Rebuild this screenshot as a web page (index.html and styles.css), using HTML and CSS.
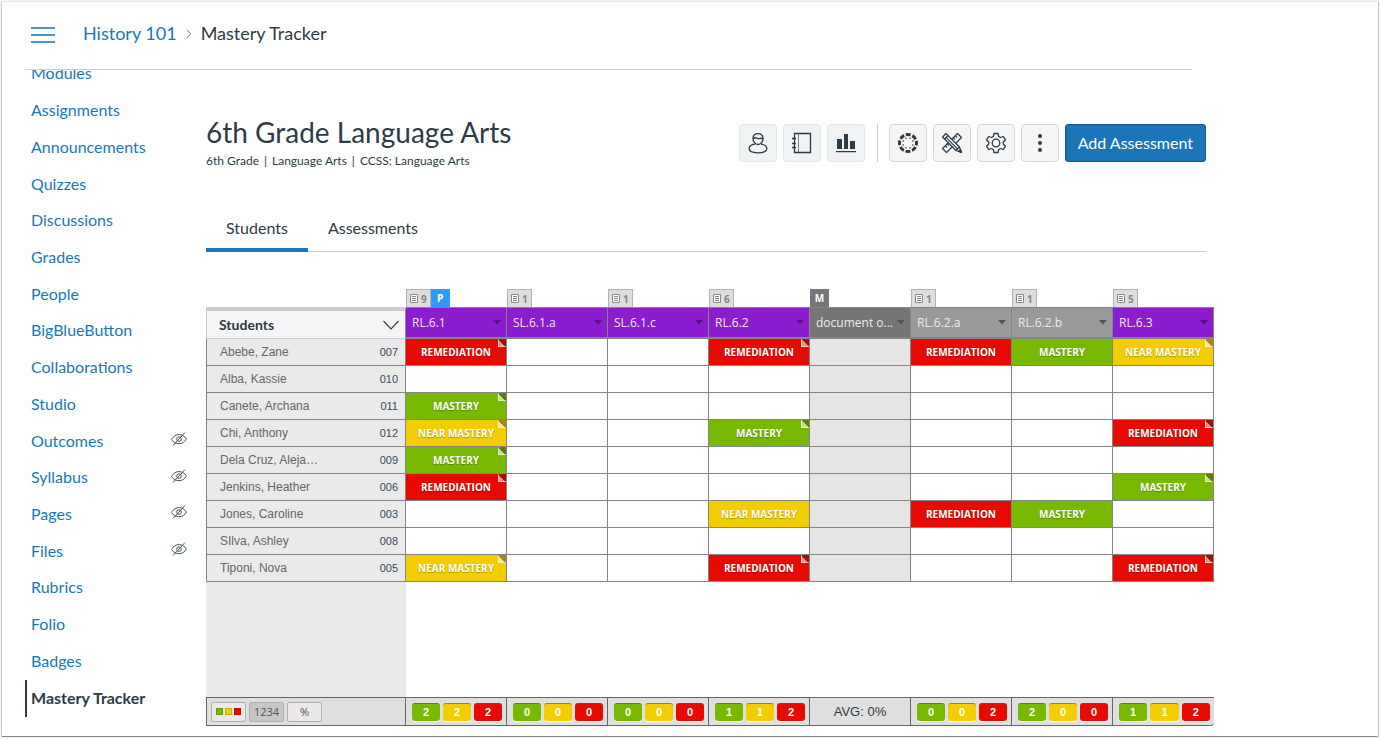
FILE: index.html
```html
<!DOCTYPE html>
<html lang="en">
<head>
<meta charset="utf-8">
<title>Mastery Tracker</title>
<link rel="stylesheet" href="styles.css">
</head>
<body>
<svg class="defs" aria-hidden="true">
  <symbol id="hidden" viewBox="0 0 16 14"><g fill="none" stroke="currentColor" stroke-width="1"><path d="M.6 7.6C2.5 3.8 5.300 2.600 8 2.600s5.600 1.400 7.400 4.400c-1.700 3.300-4.500 4.700-7.400 4.700S2.400 10.500.6 7.600z"/><circle cx="8" cy="7.100" r="2.300"/><path d="M2 13.500 14 .5"/></g></symbol>
  <symbol id="doc" viewBox="0 0 8 9"><path d="M.5.5h7v8h-7z" fill="#fff" stroke="#8a8a8a"/><path d="M2 2.500h4M2 4.500h4M2 6.500h4" stroke="#8a8a8a"/></symbol>
  <symbol id="caret" viewBox="0 0 8 5"><path d="M0 0h8L4 4.500z" fill="currentColor"/></symbol>
</svg>
<div class="frame">
  <header class="topbar">
    <button class="menu" aria-label="Menu"><span></span><span></span><span></span></button>
    <nav class="crumbs" aria-label="Breadcrumb">
      <a href="#">History 101</a>
      <svg width="6" height="10" viewBox="0 0 6 10"><path d="M1 1.800 4.800 5.800 1 9.800" fill="none" stroke="#6b7780"/></svg>
      <span>Mastery Tracker</span>
    </nav>
  </header>
  <div class="body">
    <nav class="side" aria-label="Course">
      <ul>
        <li><a href="#">Modules</a></li>
        <li><a href="#">Assignments</a></li>
        <li><a href="#">Announcements</a></li>
        <li><a href="#">Quizzes</a></li>
        <li><a href="#">Discussions</a></li>
        <li><a href="#">Grades</a></li>
        <li><a href="#">People</a></li>
        <li><a href="#">BigBlueButton</a></li>
        <li><a href="#">Collaborations</a></li>
        <li><a href="#">Studio</a></li>
        <li><a href="#">Outcomes</a><svg class="eye"><use href="#hidden"/></svg></li>
        <li><a href="#">Syllabus</a><svg class="eye"><use href="#hidden"/></svg></li>
        <li><a href="#">Pages</a><svg class="eye"><use href="#hidden"/></svg></li>
        <li><a href="#">Files</a><svg class="eye"><use href="#hidden"/></svg></li>
        <li><a href="#">Rubrics</a></li>
        <li><a href="#">Folio</a></li>
        <li><a href="#">Badges</a></li>
        <li class="current"><a href="#" aria-current="page">Mastery Tracker</a></li>
      </ul>
    </nav>
    <main>
      <div class="heading">
        <div>
          <h1>6th Grade Language Arts</h1>
          <p class="meta"><span>6th Grade</span><span>|</span><span>Language Arts</span><span>|</span><span>CCSS: Language Arts</span></p>
        </div>
        <div class="tools">
          <button class="tool view" aria-label="Student view"><svg width="20" height="22" viewBox="0 0 20 22"><g fill="none" stroke="currentColor" stroke-width="1.300"><path d="M5 6.500C5 3.500 7 1.600 10 1.600s5 1.900 5 4.900-2 6-5 6-5-3-5-6z"/><path d="M5.200 6.800C7 4.300 8.500 6.600 10.500 6.600S13.500 5.500 14.800 7"/><path d="M7 12.200C3.500 12.600 1.200 14.200 1.200 16.600c0 2.500 3 4.200 8.800 4.200s8.800-1.700 8.800-4.200c0-2.400-2.300-4-5.800-4.400"/></g></svg></button>
          <button class="tool view" aria-label="Notebook"><svg width="20" height="22" viewBox="0 0 20 22"><g fill="none" stroke="currentColor"><path d="M2.500 1.500h16v19h-16z" stroke-width="1.300"/><path d="M6.500 1.500v19" stroke-opacity=".6"/><path d="M0 6.500h4M0 11.500h4M0 15.500h4" stroke-width="1.300"/></g></svg></button>
          <button class="tool view" aria-label="Charts"><svg width="20" height="20" viewBox="0 0 20 20"><path d="M1 6h5v10H1zM8 1h4v15H8zM14 8h5v8h-5zM0 18h20v1.300H0z" fill="currentColor"/></svg></button>
          <span class="divider"></span>
          <button class="tool" aria-label="Canvas"><svg width="22" height="22" viewBox="0 0 22 22"><circle cx="11" cy="11" r="8.500" fill="none" stroke="currentColor" stroke-width="3" stroke-dasharray="4.900 1.776" stroke-dashoffset="2.450"/><g fill="currentColor"><circle cx="15.800" cy="9" r=".8"/><circle cx="15.800" cy="13" r=".8"/><circle cx="6.200" cy="9" r=".8"/><circle cx="6.200" cy="13" r=".8"/><circle cx="9" cy="6.200" r=".8"/><circle cx="13" cy="6.200" r=".8"/><circle cx="9" cy="15.800" r=".8"/><circle cx="13" cy="15.800" r=".8"/></g></svg></button>
          <button class="tool" aria-label="Design tools"><svg width="22" height="22" viewBox="0 0 22 22"><g stroke="currentColor" stroke-width="1.200" fill="#f5f5f5" stroke-linejoin="round"><path d="M1.500 16.500 16.500 1.500l4 4-15 15z"/><path d="m4.500 14 1.500 1.500M6.500 12 8 13.500M12.500 6 14 7.500M14.500 4 16 5.500" /><path d="M1.500 5 5 1.500 18.500 15 20.500 20.500 15 18.500z"/><path d="M3.500 7 7 3.500M5 5.300 17 17.300M15 18.500l3.500-3.500"/><path d="m20.500 20.500-1-3-2 2z" fill="currentColor"/></g></svg></button>
          <button class="tool" aria-label="Settings"><svg width="22" height="22" viewBox="0 0 22 22"><g fill="none" stroke="currentColor" stroke-width="1.300" stroke-linejoin="round"><path d="M9 1.500h4l.6 2.900 1.900 1.100 2.900-1 2 3.400-2.200 2v2.200l2.200 2-2 3.400-2.900-1-1.900 1.100-.6 2.900H9l-.6-2.900-1.900-1.100-2.900 1-2-3.400 2.200-2V9.900l-2.200-2 2-3.400 2.900 1 1.900-1.100z"/><circle cx="11" cy="11" r="3.800"/></g></svg></button>
          <button class="tool" aria-label="More"><svg width="6" height="20" viewBox="0 0 6 20"><g fill="currentColor"><circle cx="3" cy="3" r="2"/><circle cx="3" cy="10" r="2"/><circle cx="3" cy="17" r="2"/></g></svg></button>
          <button class="primary">Add Assessment</button>
        </div>
      </div>
      <div class="tabs" role="tablist">
        <button role="tab" aria-selected="true">Students</button>
        <button role="tab" aria-selected="false">Assessments</button>
      </div>
      <table class="grid">
        <colgroup><col class="name-col"><col span="8"></colgroup>
        <thead>
          <tr class="tags">
            <td></td>
            <td><span class="tag"><svg><use href="#doc"/></svg>9</span><span class="tag power">P</span></td>
            <td><span class="tag"><svg><use href="#doc"/></svg>1</span></td>
            <td><span class="tag"><svg><use href="#doc"/></svg>1</span></td>
            <td><span class="tag"><svg><use href="#doc"/></svg>6</span></td>
            <td><span class="tag manual">M</span></td>
            <td><span class="tag"><svg><use href="#doc"/></svg>1</span></td>
            <td><span class="tag"><svg><use href="#doc"/></svg>1</span></td>
            <td><span class="tag"><svg><use href="#doc"/></svg>5</span></td>
          </tr>
          <tr class="cols">
            <th class="corner" scope="col"><button>Students<svg width="16" height="10" viewBox="0 0 16 10"><path d="m.5 1 7.500 8 7.500-8" fill="none" stroke="currentColor" stroke-width="1.100"/></svg></button></th>
            <th scope="col"><button>RL.6.1<svg class="caret"><use href="#caret"/></svg></button></th>
            <th scope="col"><button>SL.6.1.a<svg class="caret"><use href="#caret"/></svg></button></th>
            <th scope="col"><button>SL.6.1.c<svg class="caret"><use href="#caret"/></svg></button></th>
            <th scope="col"><button>RL.6.2<svg class="caret"><use href="#caret"/></svg></button></th>
            <th scope="col" class="dark"><button>document o...<svg class="caret"><use href="#caret"/></svg></button></th>
            <th scope="col" class="mute"><button>RL.6.2.a<svg class="caret"><use href="#caret"/></svg></button></th>
            <th scope="col" class="mute"><button>RL.6.2.b<svg class="caret"><use href="#caret"/></svg></button></th>
            <th scope="col"><button>RL.6.3<svg class="caret"><use href="#caret"/></svg></button></th>
          </tr>
        </thead>
        <tbody>
          <tr><th scope="row"><div>Abebe, Zane<span>007</span></div></th><td class="r fold">REMEDIATION</td><td></td><td></td><td class="r fold">REMEDIATION</td><td class="off"></td><td class="r">REMEDIATION</td><td class="g">MASTERY</td><td class="y fold">NEAR MASTERY</td></tr>
          <tr><th scope="row"><div>Alba, Kassie<span>010</span></div></th><td></td><td></td><td></td><td></td><td class="off"></td><td></td><td></td><td></td></tr>
          <tr><th scope="row"><div>Canete, Archana<span>011</span></div></th><td class="g fold">MASTERY</td><td></td><td></td><td></td><td class="off"></td><td></td><td></td><td></td></tr>
          <tr><th scope="row"><div>Chi, Anthony<span>012</span></div></th><td class="y fold">NEAR MASTERY</td><td></td><td></td><td class="g fold">MASTERY</td><td class="off"></td><td></td><td></td><td class="r fold">REMEDIATION</td></tr>
          <tr><th scope="row"><div>Dela Cruz, Aleja…<span>009</span></div></th><td class="g fold">MASTERY</td><td></td><td></td><td></td><td class="off"></td><td></td><td></td><td></td></tr>
          <tr><th scope="row"><div>Jenkins, Heather<span>006</span></div></th><td class="r fold">REMEDIATION</td><td></td><td></td><td></td><td class="off"></td><td></td><td></td><td class="g fold">MASTERY</td></tr>
          <tr><th scope="row"><div>Jones, Caroline<span>003</span></div></th><td></td><td></td><td></td><td class="y">NEAR MASTERY</td><td class="off"></td><td class="r">REMEDIATION</td><td class="g">MASTERY</td><td></td></tr>
          <tr><th scope="row"><div>SIlva, Ashley<span>008</span></div></th><td></td><td></td><td></td><td></td><td class="off"></td><td></td><td></td><td></td></tr>
          <tr><th scope="row"><div>Tiponi, Nova<span>005</span></div></th><td class="y fold">NEAR MASTERY</td><td></td><td></td><td class="r fold">REMEDIATION</td><td class="off"></td><td></td><td></td><td class="r fold">REMEDIATION</td></tr>
        </tbody>
        <tfoot>
          <tr class="filler"><td></td><td colspan="8"></td></tr>
          <tr class="totals">
            <td><div class="modes"><button aria-label="Colors"><i class="g"></i><i class="y"></i><i class="r"></i></button><button class="on">1234</button><button>%</button></div></td>
            <td><div class="counts"><b class="g">2</b><b class="y">2</b><b class="r">2</b></div></td>
            <td><div class="counts"><b class="g">0</b><b class="y">0</b><b class="r">0</b></div></td>
            <td><div class="counts"><b class="g">0</b><b class="y">0</b><b class="r">0</b></div></td>
            <td><div class="counts"><b class="g">1</b><b class="y">1</b><b class="r">2</b></div></td>
            <td class="avg">AVG: 0%</td>
            <td><div class="counts"><b class="g">0</b><b class="y">0</b><b class="r">2</b></div></td>
            <td><div class="counts"><b class="g">2</b><b class="y">0</b><b class="r">0</b></div></td>
            <td><div class="counts"><b class="g">1</b><b class="y">1</b><b class="r">2</b></div></td>
          </tr>
        </tfoot>
      </table>
    </main>
  </div>
</div>
</body>
</html>
```
FILE: styles.css
```css
* { box-sizing: border-box; }
body { margin: 0; background: #f4f4f4; color: #2d3b45; font-family: Lato, sans-serif; font-size: 16px; }
a { color: #1b77b9; text-decoration: none; }
button { font: inherit; color: inherit; border: 0; padding: 0; background: none; cursor: pointer; }
.defs { position: absolute; width: 0; height: 0; }

.frame { margin: 1px 1px 0; min-height: 736px; background: #fff; border: 1px solid #c8c8c8; border-top-color: #e6e6e6; border-bottom-color: #858585; border-radius: 2px; padding: 0 23px; }
.topbar { display: flex; align-items: center; height: 68px; margin-right: 163px; padding: 0 0 2px 6px; border-bottom: 1px solid #c7cdd1; }
.menu { display: flex; flex-direction: column; gap: 5px; width: 24px; margin-right: 28px; }
.menu span { height: 2px; background: #4a97cb; }
.crumbs { display: flex; align-items: center; gap: 9px; padding-bottom: 4px; font-size: 18px; line-height: 24px; }

.body { display: flex; }
.side { flex: none; width: 162px; margin-right: 19px; overflow: hidden; }
.side ul { display: flex; flex-direction: column; height: 661px; margin: -14px 0 0; padding: 0; list-style: none; }
.side li { flex: 1; display: flex; align-items: center; justify-content: space-between; padding: 0 0 2px 6px; line-height: 20px; }
.side .current { border-left: 2px solid #2d3b45; padding-left: 4px; font-weight: 700; }
.side .current a { color: #2d3b45; }
.eye { width: 16px; height: 14px; margin-bottom: 3px; color: #4a5660; }

main { flex: 1; min-width: 0; margin-right: 141px; }
.heading { display: flex; justify-content: space-between; align-items: flex-start; margin: 46px 8px 0 0; }
h1 { margin: 0; font-size: 28px; line-height: 32px; font-weight: 400; }
.meta { display: flex; gap: 5px; margin: 5px 0 0; font-size: 12px; line-height: 16px; }
.tools { display: flex; align-items: center; gap: 6px; padding-top: 8px; }
.tool { display: grid; place-items: center; width: 38px; height: 38px; background: #f5f5f5; border: 1px solid #d6d9db; border-radius: 4px; }
.tool.view { background: #eff3f4; border-color: #e2e7e9; }
.divider { width: 1px; height: 38px; margin: 0 5px 0 6px; background: #c7cdd1; }
.primary { height: 38px; padding: 0 12px 2px; color: #fff; background: #1b75b8; border: 1px solid #115a90; border-radius: 3px; }

.tabs { display: flex; margin: 42px 8px 0 0; border-bottom: 1px solid #c7cdd1; }
.tabs button { height: 41px; padding: 0 20px 4px; margin-bottom: -1px; border-bottom: 4px solid transparent; }
.tabs [aria-selected="true"] { border-bottom-color: #1b75b8; }

.grid { width: 100%; margin-top: 37px; table-layout: fixed; border-collapse: separate; border-spacing: 0; font-family: "Open Sans", sans-serif; }
.grid td, .grid th { padding: 0; }
.name-col { width: 200px; }
.tags td { height: 18px; line-height: 0; }
.tag { display: inline-flex; align-items: center; gap: 3px; height: 18px; padding: 0 3px; vertical-align: top; border: 1px solid #b3b3b3; border-bottom: 0; background: #dedede; color: #858585; font-size: 10px; line-height: 16px; font-weight: 700; }
.tag svg { width: 8px; height: 9px; }
.tag.power, .tag.manual { justify-content: center; width: 19px; border: 0; color: #fff; background: #2f9bff; }
.tag.manual { background: #757575; }

.cols th { height: 32px; background: #8b1ccf; border: 1px solid #858585; border-left: 0; border-bottom-width: 2px; color: #ececec; font-size: 12px; font-weight: 400; }
.cols th.dark { background: #757575; }
.cols th.mute { background: #999; }
.cols button { display: flex; align-items: center; justify-content: space-between; width: 100%; height: 29px; padding: 0 5px 0 6px; }
.caret { width: 8px; height: 5px; color: #590f88; }
.dark .caret, .mute .caret { color: #555; }
.cols .corner { background: #f5f5f5; border: 1px solid #c7cdd1; border-top-width: 4px; border-right-color: #858585; color: #2d3b45; }
.cols .corner button { height: 27px; padding: 0 6px 0 12px; font: 700 14px/20px Lato, sans-serif; }

tbody td, tbody th { height: 27px; border: 1px solid #858585; border-top: 0; border-left: 0; }
tbody td { position: relative; text-align: center; color: #fff; font-size: 10px; line-height: 14px; font-weight: 700; text-shadow: 0 1px 1px rgba(0, 0, 0, .3); }
tbody th { background: #eaeaea; border-left: 1px solid #858585; font-family: "Liberation Sans", Arial, sans-serif; font-size: 12px; line-height: 14px; font-weight: 400; color: #666; }
tbody th div { display: flex; justify-content: space-between; padding: 0 7px 0 13px; }
tbody th span { font-size: 11px; color: #3d4a53; }
tbody .off { background: #e5e5e5; }
.g { background: #76b900; }
.y { background: #f3cd00; }
.r { background: #e60a00; }
.fold::after { content: ""; position: absolute; top: 0; right: 0; width: 7px; height: 7px; border: solid rgba(255, 255, 255, .5); border-width: 0 0 1px 1px; background: linear-gradient(to top right, rgba(255, 255, 255, .55) 50%, rgba(60, 30, 30, .4) 50%) border-box; }

.filler td { height: 115px; }
.filler td:first-child { background: #eaeaea; }
.totals td { height: 29px; background: #dfdfdf; border: 1px solid #666; border-left: 0; }
.totals td:first-child { border-left: 1px solid #666; }
.totals td:last-child { border-right: 0; border-bottom-right-radius: 4px; }
.modes { display: flex; gap: 3px; padding-left: 4px; }
.modes button { display: flex; align-items: center; justify-content: center; gap: 2px; width: 35px; height: 20px; border: 1px solid #b0b0b0; border-radius: 2px; background: #eae8e8; font: 11px/14px "Open Sans", sans-serif; color: #555; }
.modes .on { background: #c6c6c6; }
.modes i { width: 7px; height: 7px; box-shadow: inset 0 0 0 1px rgba(0, 0, 0, .15); }
.counts { display: flex; gap: 3px; padding: 0 4px 0 6px; }
.counts b { flex: 1; height: 18px; border-top: 1px solid rgba(70, 90, 90, .6); border-radius: 3px; box-shadow: 0 1px 0 #fff; color: #fff; text-align: center; font: 700 11px/17px "Liberation Sans", Arial, sans-serif; }
.totals .avg { text-align: center; font: 13px/16px "Liberation Sans", Arial, sans-serif; }
```
